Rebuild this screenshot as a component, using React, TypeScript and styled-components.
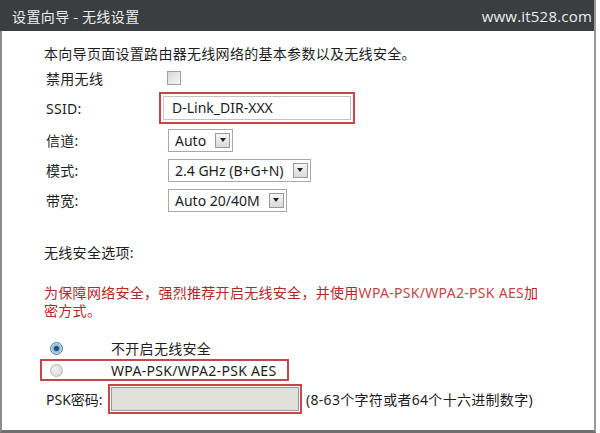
import styled, {createGlobalStyle} from "styled-components";

const GlobalStyle = createGlobalStyle`
    html, body {
        margin: 0;
        padding: 0;
        background: #ffffff;
    }
    body {
        font-family: "Noto Sans", "Noto Sans CJK SC", sans-serif;
        font-size: 14px;
        letter-spacing: 0.3px;
        color: #1e1e1e;
    }
`

const Page = styled.div`
    width: 600px;
    height: 433px;
    background: #fff;
    overflow: hidden;
`

const Frame = styled.div`
    width: 592px;
    height: 430px;
    border-left: 2px solid #8c8c8c;
    border-right: 2px solid #9a9a9a;
    border-bottom: 3px solid #6f6f6f;
    display: flex;
    flex-direction: column;
`

const Header = styled.div`
    height: 31px;
    margin-left: -2px;
    background: #3b3e40;
    display: flex;
    align-items: center;
    justify-content: space-between;
    padding: 0 2px 0 12px;
    color: #ececec;
`

const Title = styled.div`
    font-family: "Noto Sans CJK SC", sans-serif;
    font-size: 14px;
    letter-spacing: 0.4px;
`

const Watermark = styled.div`
    font-family: "Open Sans", "Noto Sans", sans-serif;
    font-size: 15px;
    letter-spacing: 0.2px;
`

const Body = styled.div`
    padding: 13px 0 0 42px;
    display: flex;
    flex-direction: column;
`

const Intro = styled.div`
    height: 20px;
    line-height: 20px;
`

const Field = styled.div<{ $h: number }>`
    display: grid;
    grid-template-columns: 115px auto;
    align-items: center;
    height: ${p => p.$h}px;
`

const Label = styled.div`
    padding-left: 2px;
`

const Checkbox = styled.div`
    width: 12px;
    height: 12px;
    margin-left: 8px;
    border: 1px solid #a0a0a0;
    background: linear-gradient(135deg, #d8d8d8, #f7f7f7);
`

const Highlight = styled.div<{ $w: number, $pad: number }>`
    width: ${p => p.$w}px;
    border: 2px solid #c8454a;
    padding: ${p => p.$pad}px;
    box-sizing: border-box;
`

const TextInput = styled.div<{ $disabled?: boolean }>`
    height: 22px;
    line-height: 22px;
    border: 1px solid ${p => p.$disabled ? "#9a9a9a" : "#c4c4c4"};
    background: ${p => p.$disabled ? "#e2e0db" : "#fff"};
    padding-left: 8px;
    letter-spacing: 0;
`

const Select = styled.div`
    display: inline-flex;
    align-items: center;
    justify-self: start;
    margin-left: 9px;
    height: 21px;
    border: 1px solid #a8a8a8;
    padding: 0 2px 0 6px;
    gap: 9px;
    background: #fff;
    letter-spacing: 0;
`

const Arrow = styled.div`
    width: 13px;
    height: 13px;
    border: 1px solid #9a9a9a;
    background: linear-gradient(#f6f6f6, #dadada);
    display: flex;
    align-items: center;
    justify-content: center;

    &::after {
        content: "";
        border-left: 3px solid transparent;
        border-right: 3px solid transparent;
        border-top: 4px solid #222;
    }
`

const Section = styled.div`
    margin-top: 28px;
    height: 20px;
    line-height: 20px;
`

const Warning = styled.div`
    margin-top: 21px;
    width: 500px;
    line-height: 18px;
    color: #b3262b;
`

const Latin = styled.span`
    color: #c4474b;
`

const Options = styled.div`
    margin-top: 17px;
    display: flex;
    flex-direction: column;
`

const RadioRow = styled.div<{ $boxed?: boolean }>`
    display: flex;
    align-items: center;
    height: 18px;
    width: 241px;
    margin-left: -4px;
    padding-left: 4px;
    border: 2px solid ${p => p.$boxed ? "#c8454a" : "transparent"};
`

const Radio = styled.div<{ $on?: boolean }>`
    width: 11px;
    height: 11px;
    margin-left: 4px;
    border-radius: 50%;
    border: 1px solid ${p => p.$on ? "#4f7ea3" : "#b8b8b8"};
    background: ${p => p.$on
        ? "radial-gradient(circle, #1c4f7a 0 2px, #7fb2d6 3px, #d5e6f2 6px)"
        : "radial-gradient(circle at 40% 40%, #f4f4f4, #d2d2d2)"};
`

const RadioText = styled.div`
    margin-left: 48px;
`

const PskRow = styled.div`
    display: flex;
    align-items: center;
    margin-top: 3px;
    height: 30px;
`

const PskLabel = styled.div`
    width: 62px;
    padding-left: 2px;
    letter-spacing: 0;
`

const Hint = styled.div`
    margin-left: 4px;
`

const SelectField = (p: { label: string, value: string }) => (
    <Field $h={30}>
        <Label>{p.label}</Label>
        <Select>{p.value}<Arrow/></Select>
    </Field>
)

export default function App() {
    return (
        <Page>
            <GlobalStyle/>
            <Frame>
                <Header>
                    <Title>设置向导 - 无线设置</Title>
                    <Watermark>www.it528.com</Watermark>
                </Header>
                <Body>
                    <Intro>本向导页面设置路由器无线网络的基本参数以及无线安全。</Intro>
                    <Field $h={27}>
                        <Label>禁用无线</Label>
                        <Checkbox/>
                    </Field>
                    <Field $h={34}>
                        <Label>SSID:</Label>
                        <Highlight $w={196} $pad={2}>
                            <TextInput>D-Link_DIR-XXX</TextInput>
                        </Highlight>
                    </Field>
                    <SelectField label="信道:" value="Auto"/>
                    <SelectField label="模式:" value="2.4 GHz (B+G+N)"/>
                    <SelectField label="带宽:" value="Auto 20/40M"/>

                    <Section>无线安全选项:</Section>
                    <Warning>
                        为保障网络安全，强烈推荐开启无线安全，并使用<Latin>WPA-PSK/WPA2-PSK AES</Latin>加密方式。
                    </Warning>

                    <Options>
                        <RadioRow>
                            <Radio $on/>
                            <RadioText>不开启无线安全</RadioText>
                        </RadioRow>
                        <RadioRow $boxed>
                            <Radio/>
                            <RadioText>WPA-PSK/WPA2-PSK AES</RadioText>
                        </RadioRow>
                        <PskRow>
                            <PskLabel>PSK密码:</PskLabel>
                            <Highlight $w={194} $pad={1}>
                                <TextInput $disabled/>
                            </Highlight>
                            <Hint>(8-63个字符或者64个十六进制数字)</Hint>
                        </PskRow>
                    </Options>
                </Body>
            </Frame>
        </Page>
    )
}
